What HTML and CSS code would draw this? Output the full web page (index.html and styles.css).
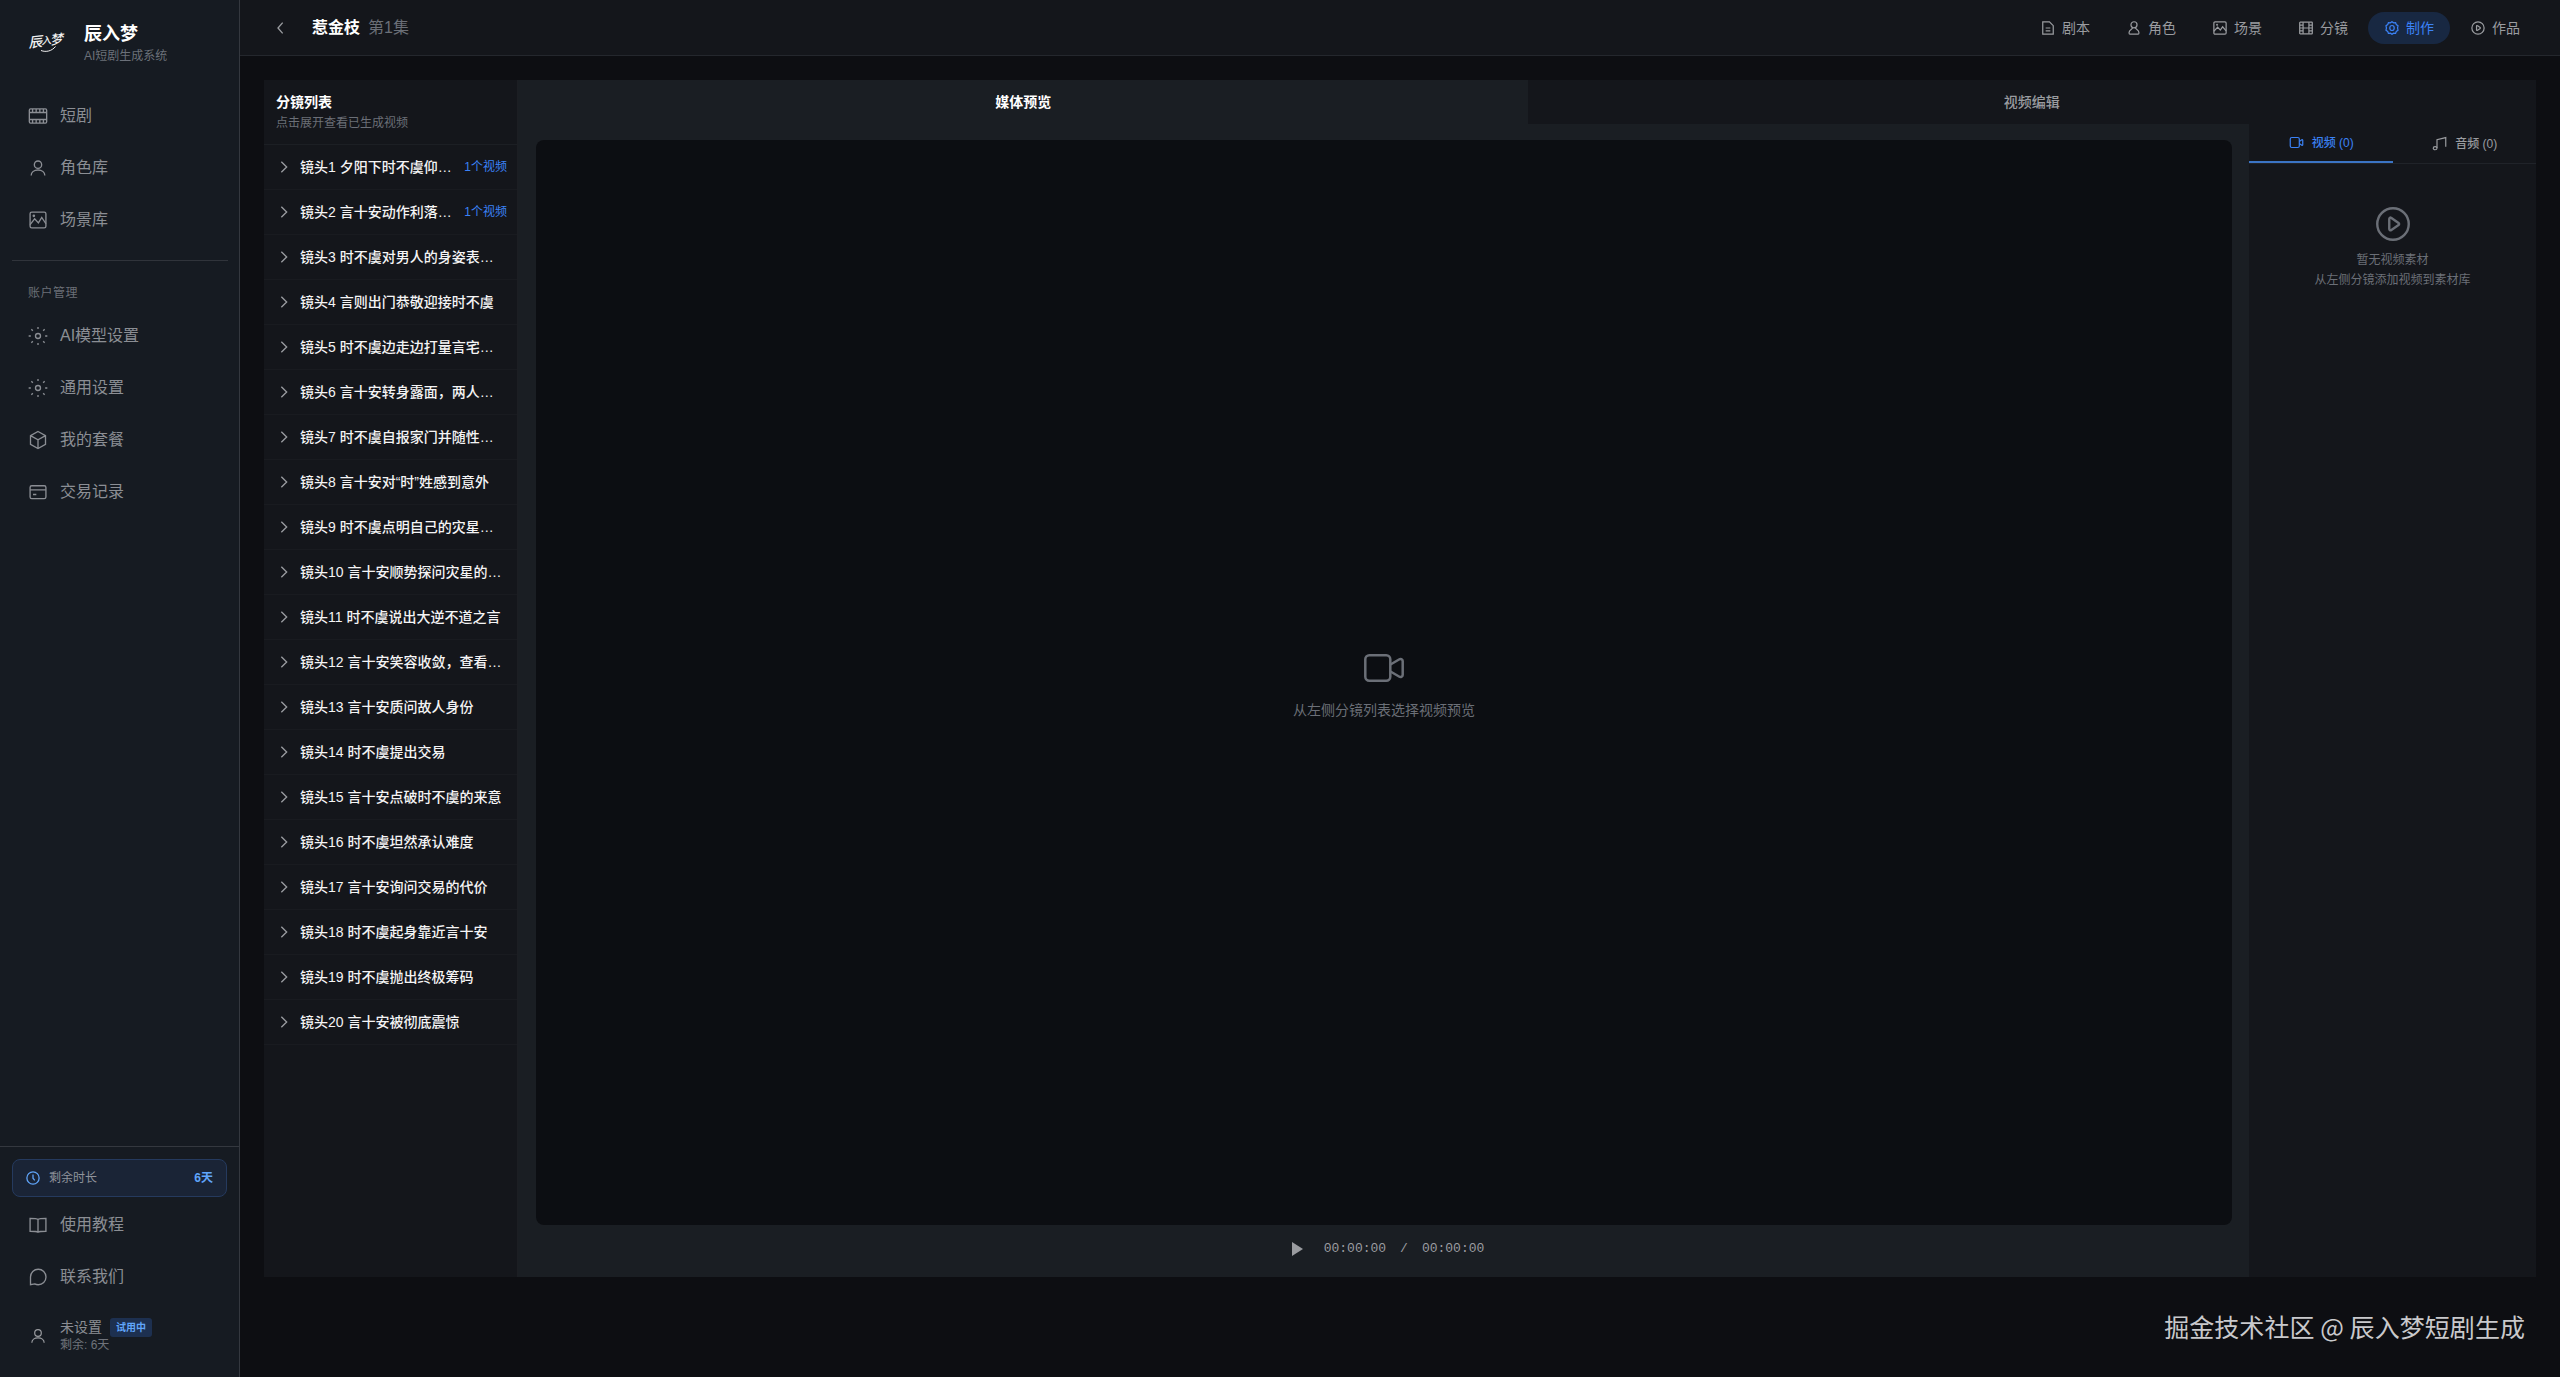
FILE: index.html
```html
<!DOCTYPE html>
<html lang="zh-CN">
<head>
<meta charset="utf-8">
<title>辰入梦</title>
<link rel="stylesheet" href="styles.css">
</head>
<body>
<svg class="defs" aria-hidden="true">
  <symbol id="user" viewBox="0 0 24 24"><circle cx="12" cy="8" r="4.4"/><path d="M3.8 21c0-4 3.6-6.6 8.2-6.6s8.2 2.6 8.2 6.6"/></symbol>
  <symbol id="sun" viewBox="0 0 24 24"><circle cx="12" cy="12" r="3"/><path d="M12 1.2v2.4M12 20.4v2.4M0.8 12h2.6M20.6 12h2.6M4 4l1.8 1.8M18.2 18.2 20 20M4 20l1.8-1.8M18.2 5.8 20 4"/></symbol>
  <symbol id="image" viewBox="0 0 24 24"><rect x="2.500" y="2.500" width="19" height="19" rx="2"/><path d="M2.500 17.500 8 10.500l4.500 5L16.500 9l5 7.500"/><circle cx="7" cy="7" r=".8"/></symbol>
  <symbol id="chev" viewBox="0 0 24 24"><path d="m8 4 8 8-8 8"/></symbol>
  <symbol id="video" viewBox="0 0 24 24"><rect x="2" y="4" width="14.500" height="16" rx="2.500"/><path d="m16.500 10.500 4-2.800c.8-.5 1.500 0 1.500.8v7c0 .8-.7 1.300-1.500.8l-4-2.800"/></symbol>
  <symbol id="play" viewBox="0 0 24 24"><circle cx="12" cy="12" r="10.500"/><path d="M9.500 8.600v6.800c0 .7.700 1 1.200.7l5-3.400c.5-.3.5-1 0-1.400l-5-3.400c-.5-.4-1.200-.1-1.200.7z"/></symbol>
</svg>
<div class="app">
  <aside class="sidebar">
    <div class="brand">
      <div class="logo"><span>辰</span><span>入</span><span>梦</span><svg viewBox="0 0 36 8"><path d="M13 5.500c5 2 11 .5 14.500-4"/></svg></div>
      <div><div class="brand-name">辰入梦</div><div class="brand-sub">AI短剧生成系统</div></div>
    </div>
    <nav class="menu">
      <a class="item"><svg class="ic" viewBox="0 0 24 24"><rect x="1.600" y="3.500" width="20.800" height="17" rx="1.500"/><path d="M1.600 7.800h20.800M1.600 16.200h20.800M5.500 3.500v4M9.800 3.500v4M14.200 3.500v4M18.500 3.500v4M5.500 16.500v4M9.800 16.500v4M14.200 16.500v4M18.500 16.500v4"/></svg>短剧</a>
      <a class="item"><svg class="ic"><use href="#user"/></svg>角色库</a>
      <a class="item"><svg class="ic"><use href="#image"/></svg>场景库</a>
    </nav>
    <div class="divider"></div>
    <div class="group">账户管理</div>
    <nav class="menu">
      <a class="item"><svg class="ic"><use href="#sun"/></svg>AI模型设置</a>
      <a class="item"><svg class="ic"><use href="#sun"/></svg>通用设置</a>
      <a class="item"><svg class="ic" viewBox="0 0 24 24"><path d="m12 1.800 9 5v10.400l-9 5-9-5V6.800zM3 6.800l9 5 9-5M12 11.800v10.400"/></svg>我的套餐</a>
      <a class="item"><svg class="ic" viewBox="0 0 24 24"><rect x="2.500" y="4.500" width="19" height="15.500" rx="2"/><path d="M2.500 9.500h19M6 15h4"/></svg>交易记录</a>
    </nav>
    <div class="side-foot">
      <div class="quota"><svg viewBox="0 0 24 24"><circle cx="12" cy="12" r="10.500"/><path d="M12 6v6.500l3 3.500"/></svg><span>剩余时长</span><b>6天</b></div>
      <a class="item foot-item"><svg class="ic" viewBox="0 0 24 24"><path d="M12 5.500C10.500 4 8 4 2.500 4v15.500c5 0 8 0 9.500 1 1.500-1 4.500-1 9.500-1V4c-5.500 0-8 0-9.500 1.500zM12 5.500v15"/></svg>使用教程</a>
      <a class="item foot-item"><svg class="ic" viewBox="0 0 24 24"><path d="M3 21.300V12a9.300 9.300 0 1 1 9.300 9.300 10 10 0 0 1-4.300-1z"/></svg>联系我们</a>
      <div class="account"><svg class="ic small"><use href="#user"/></svg><div><div class="acc-name">未设置<span class="tag">试用中</span></div><div class="acc-sub">剩余: 6天</div></div></div>
    </div>
  </aside>
  <div class="page">
    <header class="topbar">
      <svg class="back" viewBox="0 0 24 24"><path d="m16 4-7 8 7 8"/></svg>
      <span class="title">惹金枝</span><span class="episode">第1集</span>
      <nav class="steps">
        <a class="step"><svg viewBox="0 0 24 24"><path d="M3 1.500h11.500l6.500 6.500v14.500H3zM8 12h8M8 17h8"/></svg>剧本</a>
        <a class="step"><svg viewBox="0 0 24 24"><circle cx="12" cy="6.500" r="5.200"/><path d="M9.500 11.500c0 3-6 3.500-6 8.500 0 1.500.5 2.500 1.500 2.500h14c1 0 1.500-1 1.500-2.500 0-5-6-5.500-6-8.500"/></svg>角色</a>
        <a class="step"><svg viewBox="0 0 24 24"><rect x="1.500" y="1.500" width="21" height="21" rx="2"/><path d="M1.500 17.500 8 10.500l4.500 5L16.500 10l6 7"/><circle cx="7" cy="6.500" r=".7"/></svg>场景</a>
        <a class="step"><svg viewBox="0 0 24 24"><rect x="1.200" y="2" width="21.600" height="20" rx="1"/><path d="M7 2v20M17 2v20M7 12h10M1.500 7H7M1.500 12H7M1.500 17H7M17 7h5.500M17 12h5.500M17 17h5.500"/></svg>分镜</a>
        <a class="step on"><svg viewBox="0 0 24 24"><path d="M12 1.200 14.800 3.200 18.200 3 19.400 6.200 22.300 8.200 21.500 12 22.300 15.800 19.400 17.800 18.200 21 14.800 20.800 12 22.800 9.200 20.800 5.800 21 4.600 17.800 1.700 15.800 2.500 12 1.700 8.200 4.600 6.200 5.800 3 9.200 3.200z"/><ellipse cx="12" cy="12" rx="3.800" ry="4.300"/></svg>制作</a>
        <a class="step"><svg><use href="#play"/></svg>作品</a>
      </nav>
    </header>
    <main class="work">
      <section class="shots">
        <div class="shots-head"><div class="h">分镜列表</div><div class="s">点击展开查看已生成视频</div></div>
        <div class="shot"><svg><use href="#chev"/></svg><span>镜头1 夕阳下时不虞仰…</span><em>1个视频</em></div>
        <div class="shot"><svg><use href="#chev"/></svg><span>镜头2 言十安动作利落…</span><em>1个视频</em></div>
        <div class="shot"><svg><use href="#chev"/></svg><span>镜头3 时不虞对男人的身姿表…</span></div>
        <div class="shot"><svg><use href="#chev"/></svg><span>镜头4 言则出门恭敬迎接时不虞</span></div>
        <div class="shot"><svg><use href="#chev"/></svg><span>镜头5 时不虞边走边打量言宅…</span></div>
        <div class="shot"><svg><use href="#chev"/></svg><span>镜头6 言十安转身露面，两人…</span></div>
        <div class="shot"><svg><use href="#chev"/></svg><span>镜头7 时不虞自报家门并随性…</span></div>
        <div class="shot"><svg><use href="#chev"/></svg><span>镜头8 言十安对“时”姓感到意外</span></div>
        <div class="shot"><svg><use href="#chev"/></svg><span>镜头9 时不虞点明自己的灾星…</span></div>
        <div class="shot"><svg><use href="#chev"/></svg><span>镜头10 言十安顺势探问灾星的…</span></div>
        <div class="shot"><svg><use href="#chev"/></svg><span>镜头11 时不虞说出大逆不道之言</span></div>
        <div class="shot"><svg><use href="#chev"/></svg><span>镜头12 言十安笑容收敛，查看…</span></div>
        <div class="shot"><svg><use href="#chev"/></svg><span>镜头13 言十安质问故人身份</span></div>
        <div class="shot"><svg><use href="#chev"/></svg><span>镜头14 时不虞提出交易</span></div>
        <div class="shot"><svg><use href="#chev"/></svg><span>镜头15 言十安点破时不虞的来意</span></div>
        <div class="shot"><svg><use href="#chev"/></svg><span>镜头16 时不虞坦然承认难度</span></div>
        <div class="shot"><svg><use href="#chev"/></svg><span>镜头17 言十安询问交易的代价</span></div>
        <div class="shot"><svg><use href="#chev"/></svg><span>镜头18 时不虞起身靠近言十安</span></div>
        <div class="shot"><svg><use href="#chev"/></svg><span>镜头19 时不虞抛出终极筹码</span></div>
        <div class="shot"><svg><use href="#chev"/></svg><span>镜头20 言十安被彻底震惊</span></div>
      </section>
      <section class="editor">
        <div class="tabs"><div class="tab on">媒体预览</div><div class="tab">视频编辑</div></div>
        <div class="stage">
          <div class="preview">
            <div class="screen"><svg class="big" viewBox="0 0 40 28"><rect x="1.300" y="1.300" width="25" height="25.400" rx="4"/><path d="m26.500 10.500 8.500-5c1.700-1 3.700-.2 3.700 1.500v14c0 1.700-2 2.500-3.700 1.500l-8.500-5"/></svg><div>从左侧分镜列表选择视频预览</div></div>
            <div class="controls"><i class="tri"></i><span>00:00:00</span><span class="slash">/</span><span>00:00:00</span></div>
          </div>
          <div class="assets">
            <div class="asset-tabs">
              <div class="atab on"><svg><use href="#video"/></svg>视频 (0)</div>
              <div class="atab"><svg viewBox="0 0 24 24"><path d="M8 19V6l14-3.500V17"/><ellipse cx="5" cy="19.500" rx="3" ry="2.500"/></svg>音频 (0)</div>
            </div>
            <div class="empty"><svg><use href="#play"/></svg><div>暂无视频素材</div><div>从左侧分镜添加视频到素材库</div></div>
          </div>
        </div>
      </section>
    </main>
  </div>
</div>
<div class="watermark">掘金技术社区 @ 辰入梦短剧生成</div>
</body>
</html>
```

FILE: styles.css
```css
* { box-sizing: border-box; }
body {
  margin: 0;
  background: #0d0e12;
  color: #9a9ca0;
  font: 14px/20px "Liberation Sans", "Noto Sans CJK SC", sans-serif;
}
svg { fill: none; stroke: currentColor; stroke-width: 1.6; flex: none; display: block; }
.defs { display: none; }
.app { display: flex; width: 2560px; height: 1377px; overflow: hidden; }

/* sidebar */
.sidebar {
  width: 240px;
  flex: none;
  display: flex;
  flex-direction: column;
  background: #161b22;
  border-right: 1px solid #34383f;
}
.brand { display: flex; gap: 20px; padding: 22px 28px 0; height: 92px; }
.brand-name { color: #fff; font-size: 18px; font-weight: 700; line-height: 24px; }
.brand-sub { color: #6b7079; font-size: 12px; line-height: 20px; }
.logo {
  width: 36px;
  height: 36px;
  position: relative;
  color: #f0f0f0;
  display: flex;
  align-items: center;
  font: italic 13px/14px "Noto Sans CJK SC", sans-serif;
}
.logo span { margin-right: -1px; transform: rotate(-6deg); font-weight: 500; }
.logo span:first-child { font-size: 14px; transform: translateY(1px) rotate(-6deg); }
.logo span:nth-child(2) { font-size: 10px; }
.logo span:nth-child(3) { transform: translateY(-1px) rotate(-6deg); }
.logo svg { position: absolute; left: 0; bottom: 5px; width: 36px; height: 8px; stroke-width: 1; }
.menu { display: flex; flex-direction: column; gap: 4px; padding: 0 12px; }
.item {
  display: flex;
  align-items: center;
  gap: 12px;
  height: 48px;
  padding: 0 16px;
  font-size: 16px;
  color: #8b8e94;
}
.ic { width: 20px; height: 20px; }
.ic.small { width: 18px; height: 18px; margin: 0 1px; }
.divider { height: 1px; margin: 16px 11px 0 12px; background: #30343b; }
.group { margin: 22px 28px 13px; font-size: 12px; letter-spacing: .5px; color: #6b6f77; line-height: 20px; height: 16px; }
.side-foot { margin-top: auto; height: 231px; border-top: 1px solid #34383f; padding: 12px 12px 0; }
.quota {
  display: flex;
  align-items: center;
  gap: 9px;
  height: 38px;
  padding: 0 13px;
  border: 1px solid #253a5e;
  border-radius: 8px;
  background: #1a2436;
  font-size: 12px;
  color: #8f939b;
}
.quota svg { width: 14px; height: 14px; color: #60a5fa; stroke-width: 2.2; }
.quota b { margin-left: auto; color: #60a5fa; }
.foot-item { margin-top: 4px; }
.account { display: flex; align-items: center; gap: 12px; height: 60px; padding: 2px 16px 0; margin-top: 4px; }
.acc-name { display: flex; align-items: center; gap: 8px; font-size: 14px; line-height: 19px; color: #8b8e94; }
.acc-sub { font-size: 12px; line-height: 17px; color: #6f737b; }
.tag { padding: 0 6px; background: #1d3050; color: #60a5fa; font-size: 10px; font-weight: 700; border-radius: 3px; line-height: 19px; }

/* header */
.page { flex: 1; display: flex; flex-direction: column; min-width: 0; }
.topbar {
  height: 56px;
  display: flex;
  align-items: center;
  padding: 0 24px 0 32px;
  background: #14161b;
  border-bottom: 1px solid #24272d;
}
.back { width: 16px; height: 16px; margin-right: 24px; stroke-width: 2; }
.title { color: #fff; font-size: 16px; font-weight: 700; }
.episode { margin-left: 8px; font-size: 16px; color: #6b6f77; }
.steps { margin-left: auto; display: flex; gap: 4px; }
.step { display: flex; align-items: center; gap: 7px; height: 32px; padding: 0 16px 0 17px; border-radius: 16px; }
.step svg { width: 14px; height: 14px; stroke-width: 2.1; }
.step.on { background: #182842; color: #3b82f6; }

/* workspace */
.work { display: flex; width: 2272px; height: 1197px; margin: 24px 24px 0; }
.shots { width: 254px; flex: none; background: #14161b; border-right: 1px solid #1c1e23; }
.shots-head { height: 65px; padding: 12px 12px 0; border-bottom: 1px solid #1c1f24; }
.h { color: #fff; font-weight: 700; line-height: 20px; }
.s { font-size: 12px; color: #6b6f77; line-height: 23px; }
.shot { display: flex; align-items: center; height: 45px; padding: 0 12px; border-bottom: 1px solid #191b20; white-space: nowrap; }
.shot svg { width: 16px; height: 16px; margin-right: 8px; stroke-width: 2; }
.shot span { color: #f4f4f5; font-weight: 500; }
.shot em { margin-left: auto; font-style: normal; font-size: 12px; color: #3b82f6; margin-right: -2px; }
.editor { flex: 1; display: flex; flex-direction: column; }
.tabs { display: flex; height: 44px; background: #1a1e23; padding-left: 1px; }
.tab { flex: 1; display: flex; align-items: center; justify-content: center; background: #14161b; font-weight: 500; }
.tab.on { background: #1a1e23; color: #fff; font-weight: 700; }
.stage { flex: 1; display: flex; }
.preview { flex: 1; display: flex; flex-direction: column; background: #1a1e23; padding: 16px 17px 0 18px; }
.screen {
  height: 1085px;
  border-radius: 8px;
  background: #0c0e12;
  display: flex;
  flex-direction: column;
  align-items: center;
  justify-content: center;
  gap: 18px;
  padding-top: 9px;
  color: #6b6f77;
}
.big { width: 40px; height: 28px; stroke-width: 2.5; }
.controls { height: 47px; display: flex; align-items: center; justify-content: center; font: 13px/20px "Liberation Mono", monospace; padding-left: 8px; }
.tri { border-left: 11px solid #9a9ca0; border-top: 7px solid transparent; border-bottom: 7px solid transparent; margin-right: 21px; }
.slash { margin: 0 14px; }
.assets { width: 287px; flex: none; background: #14161b; }
.asset-tabs { display: flex; height: 40px; border-bottom: 1px solid #202329; }
.atab { flex: 1; display: flex; align-items: center; justify-content: center; gap: 8px; font-size: 12px; font-weight: 500; }
.atab svg { width: 15px; height: 15px; stroke-width: 1.9; margin-left: 1px; }
.atab.on { color: #3b82f6; border-bottom: 2px solid #3b74c4; }
.empty { display: flex; flex-direction: column; align-items: center; padding-top: 42px; font-size: 12px; line-height: 20px; color: #6b6f77; }
.empty svg { width: 36px; height: 36px; margin-bottom: 8px; }
.watermark { position: absolute; right: 35px; top: 1308px; font: 25px/36px "Noto Sans CJK SC", sans-serif; letter-spacing: .06px; color: #c9c9cc; white-space: nowrap; }
```
